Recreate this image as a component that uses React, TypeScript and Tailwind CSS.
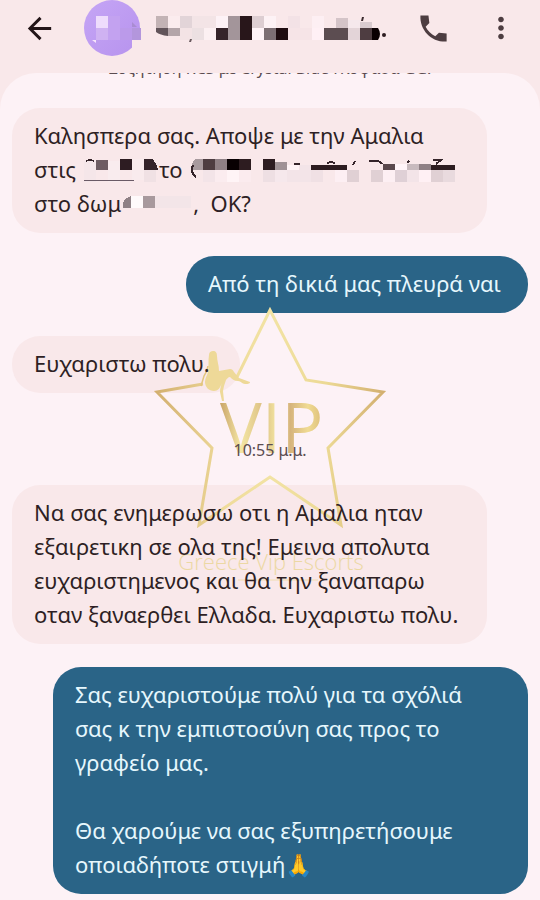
import type { ReactNode } from 'react'
import { MdArrowBack, MdMoreVert } from 'react-icons/md'
import { clsx } from 'clsx'

type Cell = [x: number, y: number, w: number, h: number, fill: string]

type MosaicProps = {
  width: number
  height: number
  cells: Cell[]
  className?: string
  children?: ReactNode
}

// Pixelated patch that hides private text
function Mosaic({ width, height, cells, className, children }: MosaicProps) {
  return (
    <svg
      width={width}
      height={height}
      viewBox={`0 0 ${width} ${height}`}
      className={clsx('shrink-0', className)}
      shapeRendering="crispEdges"
      aria-hidden="true"
    >
      {cells.map(([x, y, w, h, fill]) => (
        <rect key={`${x}-${y}`} x={x} y={y} width={w} height={h} fill={fill} />
      ))}
      {children}
    </svg>
  )
}

const NAME_CELLS: Cell[] = [
  [0, 0, 12, 12, '#c3b3b5'],
  [12, 0, 12, 12, '#fbecee'],
  [24, 0, 12, 12, '#e2d4d8'],
  [36, 0, 24, 12, '#f3e4e6'],
  [60, 0, 12, 12, '#fdf2f6'],
  [72, 0, 12, 12, '#a3959a'],
  [84, 0, 12, 12, '#28161a'],
  [96, 0, 12, 12, '#ddced2'],
  [108, 0, 12, 12, '#fdf2f5'],
  [132, 0, 12, 12, '#f3e2e6'],
  [156, 0, 12, 12, '#fdeff3'],
  [180, 2, 12, 10, '#d4c4c8'],
  [192, 4, 12, 8, '#f5e8ec'],
  [204, 6, 12, 6, '#d9cbcf'],
  [12, 12, 12, 8, '#b4a5a9'],
  [24, 12, 12, 12, '#f3e3e5'],
  [36, 12, 12, 12, '#ece0e2'],
  [48, 12, 12, 12, '#fcf0f2'],
  [60, 12, 12, 12, '#35242a'],
  [72, 12, 12, 12, '#a3959a'],
  [84, 12, 12, 12, '#28161a'],
  [96, 12, 12, 12, '#fff4f8'],
  [108, 12, 12, 12, '#7d6f74'],
  [120, 12, 12, 12, '#1e0c10'],
  [132, 12, 24, 12, '#f6e4e7'],
  [156, 12, 12, 12, '#fff0f5'],
  [168, 12, 24, 12, '#5c4d51'],
  [192, 12, 12, 12, '#e3d4d8'],
  [204, 12, 12, 12, '#4e3d41'],
]

const TIME_CELLS: Cell[] = [
  [0, 2, 12, 21, '#f5e6e9'],
  [12, 1, 12, 10, '#6e5c62'],
  [24, 2, 12, 21, '#f9ecee'],
  [36, 0, 12, 11, '#2d1c22'],
  [48, 0, 12, 21, '#f9ebed'],
  [60, 11, 12, 12, '#f0e1e4'],
]

const PLACE_CELLS: Cell[] = [
  [12, 0, 12, 11, '#4e3d41'],
  [24, 0, 12, 11, '#8f8085'],
  [36, 0, 12, 11, '#080002'],
  [48, 0, 12, 11, '#2d1c20'],
  [72, 0, 12, 11, '#2d1c20'],
  [84, 3, 12, 8, '#a09296'],
  [96, 6, 12, 5, '#fff4f6'],
  [108, 6, 12, 5, '#f3e4e8'],
  [120, 6, 36, 5, '#2d1c20'],
  [192, 5, 12, 6, '#5a484d'],
  [204, 5, 12, 6, '#fff4f8'],
  [216, 5, 12, 6, '#c8babe'],
  [228, 5, 12, 6, '#8f8085'],
  [240, 6, 24, 5, '#2d1c20'],
  [12, 11, 12, 12, '#f3e4e8'],
  [24, 11, 12, 12, '#fbecef'],
  [36, 11, 12, 12, '#fff4f6'],
  [48, 11, 12, 12, '#fbebee'],
  [72, 11, 12, 12, '#eedfe3'],
  [84, 11, 12, 12, '#f6e8ec'],
  [96, 11, 24, 12, '#f3e4e8'],
  [120, 11, 12, 12, '#f0e0e4'],
  [144, 11, 12, 12, '#fdeff3'],
  [156, 11, 12, 12, '#e0d0d4'],
  [180, 11, 12, 12, '#e0d0d4'],
  [192, 11, 12, 12, '#fdeff3'],
  [204, 11, 12, 12, '#dfd0d6'],
  [216, 11, 12, 12, '#f3e4e8'],
  [228, 11, 12, 12, '#fff0f4'],
  [240, 11, 12, 12, '#e0d0d4'],
  [252, 11, 12, 12, '#e9dade'],
]

const ROOM_CELLS: Cell[] = [
  [10, 0, 12, 12, '#fffafb'],
  [22, 0, 12, 12, '#a8999d'],
  [34, 0, 36, 12, '#f3e5e8'],
]

function Header() {
  return (
    <header className="flex h-[73px] items-start bg-[#f9e8ea] px-[22px] text-[#4d3d41]">
      <button type="button" aria-label="Back" className="flex h-14 items-center text-[#231518]">
        <MdArrowBack className="size-[35px]" />
      </button>
      <svg viewBox="0 0 57 56" className="ml-[27px] h-14 w-[57px] shrink-0" aria-hidden="true">
        <defs>
          <linearGradient id="avatar" x1="0" y1="0" x2="1" y2="1">
            <stop offset="0" stopColor="#c5a5f5" />
            <stop offset="1" stopColor="#b793ee" />
          </linearGradient>
        </defs>
        <circle cx="28" cy="28" r="28" fill="url(#avatar)" />
        <path d="M12 16h12v12H12z" fill="#eedcfc" />
        <path d="M12 28h12v12H12z" fill="#cfb2f2" />
        <path d="M24 16h12v24H24z" fill="#c3a2f0" />
        <path d="M36 28h12v12H36z" fill="#bb9aea" />
        <path d="M48 28h9v12h-9z" fill="#b396dc" />
        <path d="M48 40h9v12h-9z" fill="#f9e8ea" />
        <path d="M8 40h4v3z" fill="#f6e4fb" />
        <path d="M48 22l5 5h-5z" fill="#a98cd2" />
      </svg>
      <div className="flex h-14 min-w-0 flex-1 items-center overflow-hidden pl-[15px]">
        <Mosaic width={230} height={28} cells={NAME_CELLS} className="mt-1">
          <g shapeRendering="auto">
            <path d="M0 12h12v8Q4 19 0 16z" fill="#62545a" />
            <path d="M34 23h2l-1 3h-2z" fill="#6a5a5e" />
            <path d="M216 12h6q4 6 0 12h-6z" fill="#0a0002" />
            <path d="M206 1h2l-1 4h-2z" fill="#3a2a2e" />
            <circle cx="228" cy="19" r="2" fill="#2d1c20" />
          </g>
        </Mosaic>
      </div>
      <div className="flex h-14 items-center gap-[33px]">
        <button type="button" aria-label="Call">
          <svg viewBox="0 0 24 24" className="size-[35px]" fill="currentColor">
            <path d="M21 15.46l-5.27-.61-2.52 2.52c-2.83-1.44-5.15-3.75-6.59-6.59l2.53-2.53L8.54 3H3.03C2.45 13.18 10.82 21.55 21 20.97v-5.51z" />
          </svg>
        </button>
        <button type="button" aria-label="More options">
          <MdMoreVert className="size-[34px]" />
        </button>
      </div>
    </header>
  )
}

type BubbleProps = {
  sent?: boolean
  className?: string
  children: ReactNode
}

function Bubble({ sent = false, className, children }: BubbleProps) {
  return (
    <div
      className={clsx(
        'max-w-[475px] rounded-[28px] px-[22px] pt-2.5 pb-[13px] text-[22px] leading-[34px]',
        sent ? 'self-end bg-[#2a6487] text-[#e6f7fd]' : 'self-start bg-[#f9e8ea] text-[#2e1f24]',
        className,
      )}
    >
      {/* Text stays above the watermark */}
      <div className="relative z-10">{children}</div>
    </div>
  )
}

function Watermark() {
  return (
    <svg
      viewBox="0 0 240 280"
      className="pointer-events-none absolute top-[304px] left-1/2 h-[280px] w-60 -translate-x-1/2"
      aria-hidden="true"
    >
      <defs>
        <linearGradient id="star" x1="0" y1="0" x2="1" y2="0">
          <stop offset="0" stopColor="#d3b070" />
          <stop offset="0.3" stopColor="#efdb9a" />
          <stop offset="0.5" stopColor="#f2e3a4" />
          <stop offset="0.75" stopColor="#ecd994" />
          <stop offset="1" stopColor="#d3b070" />
        </linearGradient>
        <linearGradient id="letters" x1="0" y1="0" x2="1" y2="0">
          <stop offset="0" stopColor="#c9a468" />
          <stop offset="0.2" stopColor="#f4e6a4" />
          <stop offset="0.42" stopColor="#dcc084" />
          <stop offset="0.55" stopColor="#f4e6a2" />
          <stop offset="0.68" stopColor="#d6b47c" />
          <stop offset="0.85" stopColor="#f0db93" />
          <stop offset="1" stopColor="#dcbd78" />
        </linearGradient>
      </defs>
      <path
        d="M53 80L7 88L62 144L49 221L120 173L191 221L178 144L233 88L156 76L120 6L87 73"
        fill="none"
        stroke="url(#star)"
        strokeWidth="3"
      />
      <path
        d="M63 47c3 0 4 2 4 5c0 5 2 9 2 15l11-2c2 0 3 1 4 3l5 6c4 1 7 3 11 4c0 2-3 2-5 2c-3 0-4-3-7-3c-4 0-6-2-8-4c-2 0-3 2-4 3l-2 6l-1 5l1 10h-2l-2-9c0-4 1-6 2-9c-2 5-4 8-8 8c-5 0-9-4-9-9c0-4 2-6 3-10c1-5 0-12 1-17c0-3 2-4 4-4z"
        fill="#eed998"
      />
      <path d="M58 62q-1 6-4 10l-3 10" fill="none" stroke="#e3c67e" strokeWidth="1.5" />
      <text x="70" y="149" fill="url(#letters)" className="font-['Open_Sans'] text-[70px]">
        VIP
      </text>
      <text
        x="121"
        y="266"
        textAnchor="middle"
        fill="#ecd8a4"
        className="font-['Open_Sans'] text-[22px] font-light"
      >
        Greece Vip Escorts
      </text>
      <path d="M88 276h80" stroke="#f0dcb0" strokeWidth="1" />
    </svg>
  )
}

export default function App() {
  return (
    <div className="relative flex min-h-screen flex-col overflow-hidden bg-[#f9e8ea] font-['Noto_Sans','Open_Sans',sans-serif]">
      <Header />
      <main className="flex flex-1 flex-col rounded-t-[36px] bg-[#fdf2f6] px-3 pb-[7px]">
        {/* Conversation notice, scrolled almost out of view */}
        <div className="flex h-[5px] items-end justify-center overflow-hidden text-[16px] leading-5 whitespace-nowrap text-[#5b4c50]">
          Συζήτηση RCS με Crystal Blue Γλυφάδα GG.
        </div>

        <div className="mt-[30px] flex flex-col gap-[23px]">
          <Bubble className="w-[475px]">
            <p>Καλησπερα σας. Αποψε με την Αμαλια</p>
            <p className="flex items-center whitespace-nowrap">
              στις
              <Mosaic width={75} height={24} cells={TIME_CELLS} className="mt-1 ml-2">
                <path d="M60 0h8q4 3 6 11H60z" fill="#35242a" />
                <path d="M0 21h50" stroke="#6a5a66" strokeWidth="1" />
                <path d="M2 2q4-2 8 0" stroke="#35242a" strokeWidth="1.5" fill="none" />
              </Mosaic>
              το
              <Mosaic width={266} height={24} cells={PLACE_CELLS} className="mt-1 ml-2">
                <path d="M4 0h8v11H2q-2-8 2-11z" fill="#a89a9e" />
                <path d="M2 6q-3 8 3 12" stroke="#35242a" strokeWidth="2" fill="none" />
                <path
                  d="M103 5h6M136 5q4-4 8 0M162 6l2-4M178 2h8q3 0 5 3M216 4l2-2M242 1h8l-5 4"
                  stroke="#35242a"
                  strokeWidth="2"
                  fill="none"
                />
              </Mosaic>
            </p>
            <p className="flex items-center whitespace-nowrap">
              στο δωμ
              <Mosaic width={72} height={14} cells={ROOM_CELLS}>
                <path d="M10 0v12H2Q0 3 10 0z" fill="#8f8085" />
              </Mosaic>
              <span>,&nbsp; OK?</span>
            </p>
          </Bubble>

          <Bubble sent className="w-[342px]">
            <p>Από τη δικιά μας πλευρά ναι</p>
          </Bubble>

          <Bubble className="w-[228px]">
            <p>Ευχαριστω πολυ.</p>
          </Bubble>
        </div>

        <time className="relative z-10 pt-[46px] pb-[23px] text-center text-[16px] leading-[23px] text-[#5b4c50]">
          10:55 μ.μ.
        </time>

        <div className="flex flex-col gap-[23px]">
          <Bubble className="w-[475px]">
            <p>
              Να σας ενημερωσω οτι η Αμαλια ηταν
              <br />
              εξαιρετικη σε ολα της! Εμεινα απολυτα
              <br />
              ευχαριστημενος και θα την ξαναπαρω
              <br />
              οταν ξαναερθει Ελλαδα. Ευχαριστω πολυ.
            </p>
          </Bubble>

          <Bubble sent className="w-[475px]">
            <p>
              Σας ευχαριστούμε πολύ για τα σχόλιά
              <br />
              σας κ την εμπιστοσύνη σας προς το
              <br />
              γραφείο μας.
            </p>
            <p className="mt-[34px]">
              Θα χαρούμε να σας εξυπηρετήσουμε
              <br />
              οποιαδήποτε στιγμή🙏
            </p>
          </Bubble>
        </div>
      </main>
      <Watermark />
    </div>
  )
}
